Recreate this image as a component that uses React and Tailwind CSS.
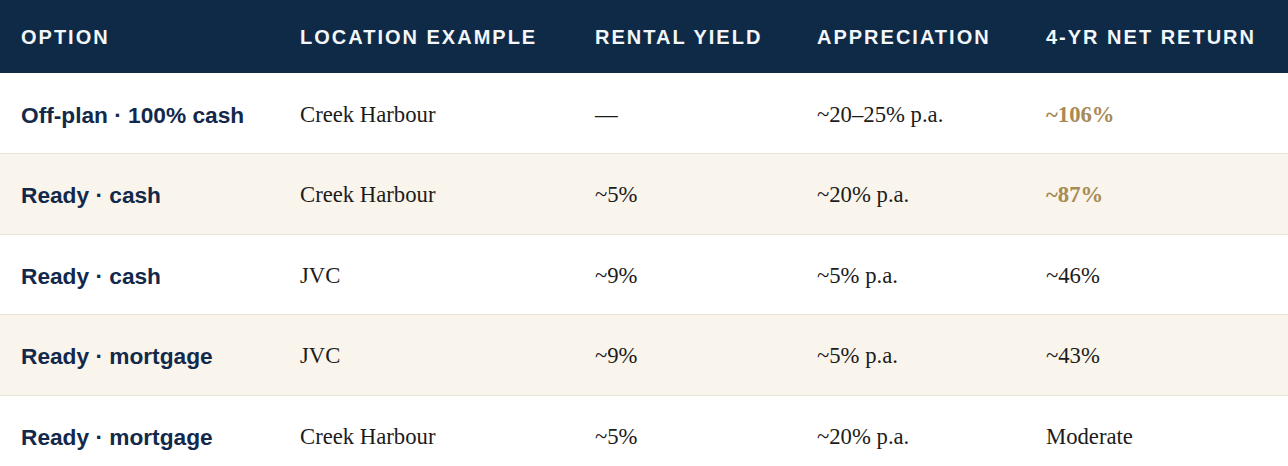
import React from "react";

const rows = [
  { option: "Off-plan · 100% cash", location: "Creek Harbour", yield: "—", appreciation: "~20–25% p.a.", ret: "~106%", highlight: true },
  { option: "Ready · cash", location: "Creek Harbour", yield: "~5%", appreciation: "~20% p.a.", ret: "~87%", highlight: true },
  { option: "Ready · cash", location: "JVC", yield: "~9%", appreciation: "~5% p.a.", ret: "~46%" },
  { option: "Ready · mortgage", location: "JVC", yield: "~9%", appreciation: "~5% p.a.", ret: "~43%" },
  { option: "Ready · mortgage", location: "Creek Harbour", yield: "~5%", appreciation: "~20% p.a.", ret: "Moderate" },
];

const headers = ["Option", "Location example", "Rental yield", "Appreciation", "4-yr net return"];

export default function App() {
  return (
    <div className="w-full bg-white">
      <table className="w-full table-fixed border-collapse">
        <colgroup>
          <col className="w-[279px]" />
          <col className="w-[295px]" />
          <col className="w-[222px]" />
          <col className="w-[229px]" />
          <col />
        </colgroup>
        <thead>
          <tr className="bg-[#0e2a47]">
            {headers.map((h) => (
              <th
                key={h}
                className="h-[73px] px-[21px] text-left align-middle font-['Liberation_Sans',Arial,sans-serif] text-[20px] font-bold uppercase leading-[30px] tracking-[2px] text-[#f4f7fa] whitespace-nowrap"
              >
                {h}
              </th>
            ))}
          </tr>
        </thead>
        <tbody>
          {rows.map((r, i) => (
            <tr
              key={i}
              className={`border-b border-[#e8e3d3] ${i % 2 === 1 ? "bg-[#faf5ec]" : "bg-white"}`}
            >
              <td className="h-[80.5px] px-[21px] pt-[3px] align-middle font-['Liberation_Sans',Arial,sans-serif] text-[22.7px] font-bold leading-[34px] text-[#13294b] whitespace-nowrap">
                {r.option}
              </td>
              <td className="px-[21px] pt-[3px] align-middle font-['Liberation_Serif','Times_New_Roman',serif] text-[22.7px] leading-[34px] text-[#1c1c1c] whitespace-nowrap">
                {r.location}
              </td>
              <td className="px-[21px] pt-[3px] align-middle font-['Liberation_Serif','Times_New_Roman',serif] text-[22.7px] leading-[34px] text-[#1c1c1c] whitespace-nowrap">
                {r.yield}
              </td>
              <td className="px-[21px] pt-[3px] align-middle font-['Liberation_Serif','Times_New_Roman',serif] text-[22.7px] leading-[34px] text-[#1c1c1c] whitespace-nowrap">
                {r.appreciation}
              </td>
              <td
                className={`px-[21px] pt-[3px] align-middle font-['Liberation_Serif','Times_New_Roman',serif] text-[22.7px] leading-[34px] whitespace-nowrap ${
                  r.highlight ? "font-bold text-[#a88a55]" : "text-[#1c1c1c]"
                }`}
              >
                {r.ret}
              </td>
            </tr>
          ))}
        </tbody>
      </table>
    </div>
  );
}
